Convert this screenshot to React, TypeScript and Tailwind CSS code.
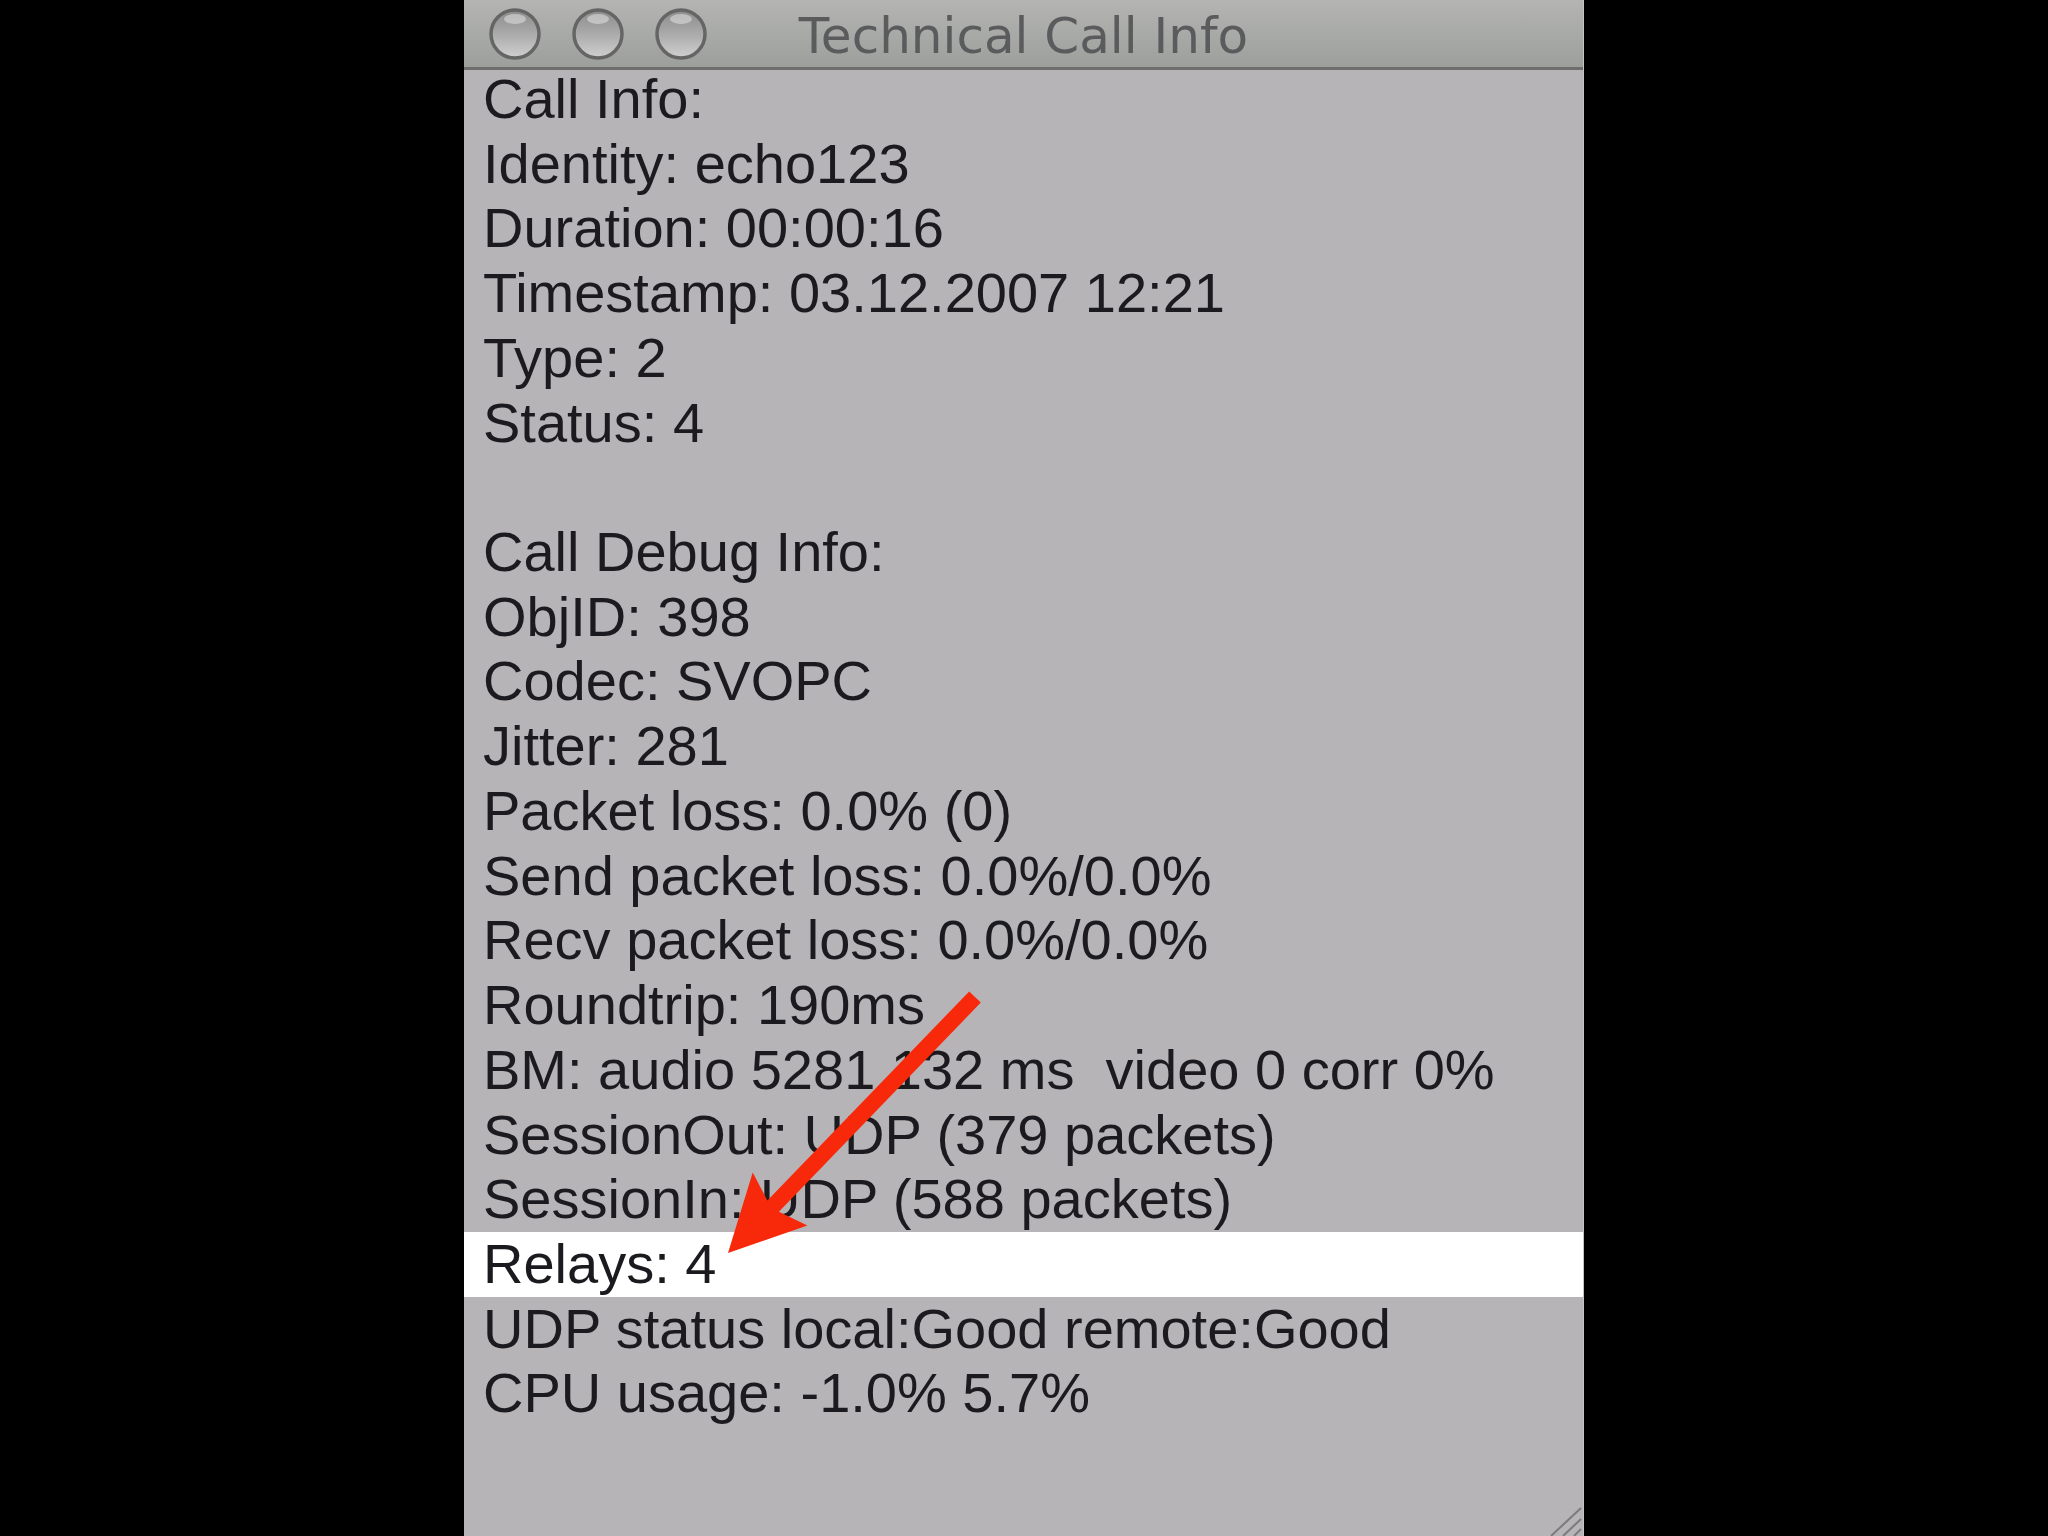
import React from 'react';

const lines: string[] = [
  'Call Info:',
  'Identity: echo123',
  'Duration: 00:00:16',
  'Timestamp: 03.12.2007 12:21',
  'Type: 2',
  'Status: 4',
  '',
  'Call Debug Info:',
  'ObjID: 398',
  'Codec: SVOPC',
  'Jitter: 281',
  'Packet loss: 0.0% (0)',
  'Send packet loss: 0.0%/0.0%',
  'Recv packet loss: 0.0%/0.0%',
  'Roundtrip: 190ms',
  'BM: audio 5281 132 ms  video 0 corr 0%',
  'SessionOut: UDP (379 packets)',
  'SessionIn: UDP (588 packets)',
  'Relays: 4',
  'UDP status local:Good remote:Good',
  'CPU usage: -1.0% 5.7%',
];

const HIGHLIGHT = 18;

function WindowButton({ id }: { id: string }) {
  return (
    <svg width="54" height="54" viewBox="0 0 54 54">
      <defs>
        <linearGradient id={`fill-${id}`} x1="0" y1="0" x2="0" y2="1">
          <stop offset="0%" stopColor="#8c8c8c" />
          <stop offset="45%" stopColor="#a7a7a7" />
          <stop offset="100%" stopColor="#d0d0d0" />
        </linearGradient>
      </defs>
      <circle cx="27" cy="27" r="24" fill={`url(#fill-${id})`} stroke="#656565" strokeWidth="3.5" />
      <ellipse cx="27" cy="12" rx="11" ry="5" fill="#ffffff" opacity="0.4" />
    </svg>
  );
}

function TitleBar() {
  return (
    <div className="grid h-[70px] grid-cols-[1fr_auto_1fr] items-center border-b-[3px] border-[#6e6f6d] bg-gradient-to-b from-[#b4b5b3] to-[#9d9f9c]">
      <div className="flex items-center gap-[29px] pl-[24px]">
        <WindowButton id="a" />
        <WindowButton id="b" />
        <WindowButton id="c" />
      </div>
      <div className="mt-[5px] font-['DejaVu_Sans',sans-serif] text-[50px] leading-none text-[#5b5b5e]">
        Technical Call Info
      </div>
      <div />
    </div>
  );
}

function Arrow() {
  return (
    <svg
      className="pointer-events-none absolute left-0 top-0"
      width="2048"
      height="1536"
      viewBox="0 0 2048 1536"
    >
      <polygon
        points="728,1253 752.7,1172.6 767.4,1200.6 969.2,991.4 980.8,1002.6 778.9,1211.8 807.4,1225.4"
        fill="#f8290b"
      />
    </svg>
  );
}

function ResizeGrip() {
  return (
    <svg className="absolute bottom-0 right-0" width="40" height="36" viewBox="0 0 40 36">
      <line x1="8" y1="36" x2="38" y2="8" stroke="#7b7b7b" strokeWidth="2" />
      <line x1="20" y1="36" x2="38" y2="19" stroke="#7b7b7b" strokeWidth="2" />
      <line x1="31" y1="36" x2="38" y2="29" stroke="#7b7b7b" strokeWidth="2" />
    </svg>
  );
}

export default function App() {
  return (
    <div className="relative h-[1536px] w-[2048px] overflow-hidden bg-black">
      <div className="relative mx-auto flex h-full w-[1120px] flex-col border-r border-[#c4c3c5] bg-[#b6b4b7]">
        <TitleBar />
        <div className="-mt-[3px] font-['Liberation_Sans',Arial,sans-serif] text-[56px] leading-[64.72px] text-[#1a1a1f]">
          {lines.map((line, i) => (
            <div
              key={i}
              className={`h-[64.72px] whitespace-pre pl-[19px] ${i === HIGHLIGHT ? 'bg-white' : ''}`}
            >
              {line}
            </div>
          ))}
        </div>
        <ResizeGrip />
      </div>
      <Arrow />
    </div>
  );
}
